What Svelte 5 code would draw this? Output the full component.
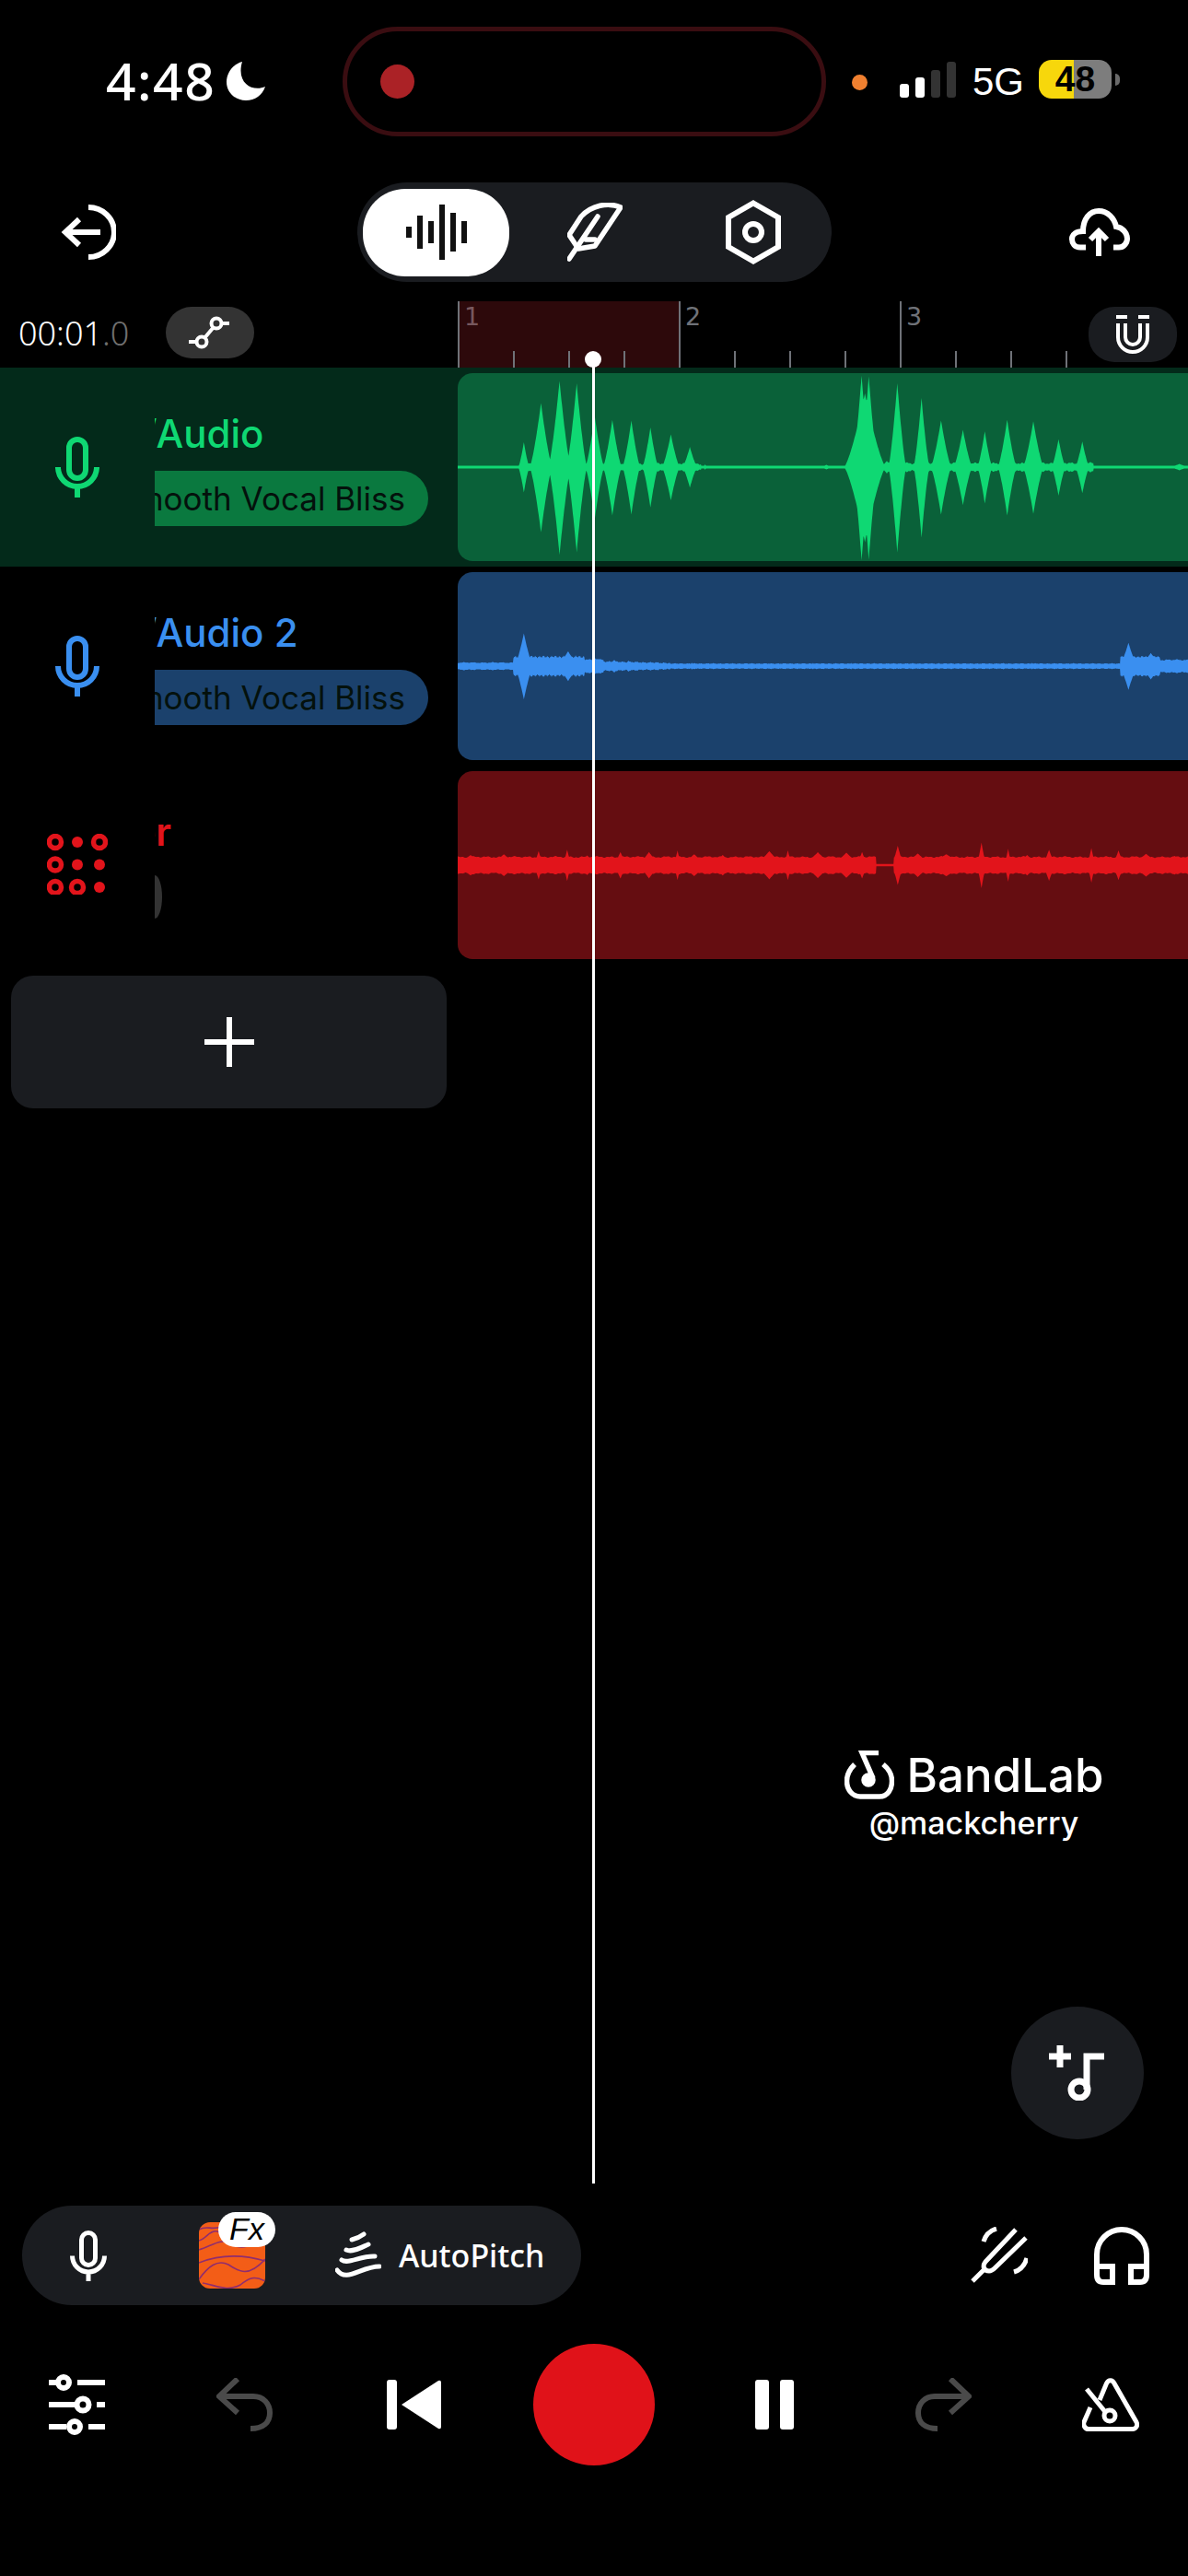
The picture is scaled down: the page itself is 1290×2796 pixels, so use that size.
<script>
  const bars = Array.from({ length: 12 }, (_, i) => ({
    major: i % 4 === 0,
    num: i % 4 === 0 ? i / 4 + 1 : null,
    hot: i < 4
  }));

  function noise(x) {
    return Math.sin(x * 0.31) * 0.5 + Math.sin(x * 0.83 + 1.2) * 0.3 + Math.sin(x * 0.11 + 2) * 0.2;
  }

  function wavePath(env) {
    const top = [];
    const bot = [];
    for (let z = 33; z <= 1570; z += 1) {
      const x = z / 1.936 - 17;
      const a = env(z) / 2.376;
      top.push(`${x.toFixed(1)} ${(102 - a).toFixed(1)}`);
      bot.unshift(`${x.toFixed(1)} ${(102 + a * 1.02).toFixed(1)}`);
    }
    return 'M' + top.join('L') + 'L' + bot.join('L') + 'Z';
  }

  // each peak: centre, amplitude, half-width at the foot
  function peaks(list, z) {
    let m = 0;
    for (const [p, a, w] of list) {
      const d = Math.abs(z - p);
      if (d < w) m = Math.max(m, a * Math.pow(1 - d / w, 1.35));
    }
    return m;
  }

  const greenPeaks = [
    [172, 64, 12], [208, 165, 24], [247, 222, 24], [283, 216, 22], [321, 132, 20], [358, 122, 20],
    [398, 120, 19], [438, 102, 17], [481, 84, 19], [521, 52, 16], [553, 7, 4],
    [882, 236, 20], [897, 234, 20], [889, 190, 44], [957, 216, 19], [1008, 178, 17], [1049, 120, 22],
    [1095, 96, 20], [1141, 92, 16], [1188, 122, 20], [1243, 118, 22], [1296, 72, 15], [1346, 66, 15],
    [1550, 8, 22], [808, 6, 14], [935, 16, 14]
  ];
  const bluePeaks = [
    [172, 84, 20], [1443, 60, 20],
    [265, 38, 26], [1490, 34, 26], [322, 20, 26], [362, 16, 18], [392, 14, 14], [525, 9, 7],
    [780, 8, 8], [860, 8, 8], [1045, 8, 8], [1180, 8, 10], [1240, 8, 10]
  ];
  const redPeaks = [
    [60, 26, 40], [130, 28, 36], [203, 36, 12], [263, 40, 10], [305, 25, 30], [375, 34, 16], [435, 34, 26],
    [495, 38, 9], [530, 28, 34], [590, 26, 30], [688, 36, 34], [727, 38, 10], [790, 33, 36], [850, 32, 36],
    [883, 34, 14], [958, 50, 14], [1000, 30, 36], [1060, 28, 50], [1134, 58, 11], [1190, 42, 9],
    [1230, 26, 30], [1276, 40, 15], [1365, 44, 10], [1422, 38, 14], [1480, 29, 40], [1540, 24, 34]
  ];

  const green = wavePath((z) => {
    let floor = 3.5;
    if (z > 165 && z < 545) floor = 9 + noise(z) * 3;
    if (z > 850 && z < 1370) floor = 10 + noise(z) * 3;
    return Math.max(floor, peaks(greenPeaks, z));
  });
  const blue = wavePath((z) => {
    let floor = 6.5 + noise(z * 1.5) * 1.2;
    if (z < 150) floor = 9 + noise(z) * 1.5;
    else if (z < 300) floor = 24 + noise(z * 2.4) * 4;
    else if (z < 340) floor = 17 + noise(z) * 2;
    else if (z < 480) floor = 12 - ((z - 340) / 140) * 4 + noise(z * 1.4) * 2;
    else if (z > 1425 && z < 1510) floor = 24 + noise(z * 2.4) * 3;
    else if (z >= 1510) floor = 16 + noise(z) * 2;
    return Math.max(floor, peaks(bluePeaks, z));
  });
  const red = wavePath((z) => {
    if (z > 912 && z < 950) return 3;
    return Math.max(21 + noise(z * 0.7) * 2.5, peaks(redPeaks, z));
  });

  const wave = [440, 452, 464, 476, 488, 500];
  const waveH = [12, 36, 24, 60, 42, 24];

  const dots = [
    [1, 0, 1],
    [1, 0, 0],
    [1, 1, 0]
  ];
</script>

{#snippet micIcon(cls)}
  <svg class={cls} viewBox="0 0 48 66" fill="none" stroke="currentColor" stroke-width="6">
    <rect x="15" y="3" width="18" height="42" rx="9" />
    <path d="M3 33A21 21 0 0 0 45 33M24 54V66" />
  </svg>
{/snippet}

<div class="app">
  <header class="status">
    <span class="time">4:48</span>
    <svg class="moon" viewBox="0 0 42 42"><path fill="#fff" d="M17 0C6 3 0 13 0 22 0 33 9 42 21 42 31 42 39 36 42 27 29 33 10 24 17 0Z" /></svg>
    <div class="island"><span class="rec-dot"></span></div>
    <span class="cam-dot"></span>
    <div class="signal">
      <i class="s1 on"></i><i class="s2 on"></i><i class="s3"></i><i class="s4"></i>
    </div>
    <span class="net">5G</span>
    <div class="battery"><span>48</span></div>
    <span class="nub"></span>
  </header>

  <nav class="toolbar">
    <svg class="back" viewBox="0 0 60 60" fill="none" stroke="#fff" stroke-width="6">
      <path d="M43 30H5M20 16L5 30 20 44" />
      <path d="M30 3A28 27 0 0 1 30 57" />
    </svg>
    <div class="segment">
      <div class="seg-active">
        <svg class="wave-icon" viewBox="440 222 66 60" fill="#111">
          {#each wave as x, i}
            <rect {x} y={252 - waveH[i] / 2} width="6" height={waveH[i]} />
          {/each}
        </svg>
      </div>
      <svg class="feather" viewBox="0 0 60 64" fill="none" stroke="#fff" stroke-width="5.500" stroke-linejoin="round" stroke-linecap="round">
        <path d="M58 5C44 -1 26 3 15 15L2 35 12 50 30 47 58 5Z" />
        <path d="M2 61L33 15M20 40H30" />
      </svg>
      <svg class="hex" viewBox="0 0 60 70" fill="none" stroke="#fff" stroke-width="6">
        <path d="M30 3.500L57 19V51L30 66.500 3 51V19Z" />
        <circle cx="30" cy="35" r="9" />
      </svg>
    </div>
    <svg class="cloud" viewBox="0 0 66 52" fill="none" stroke="#fff" stroke-width="6">
      <path d="M18 42.500H12C6 42.500 3 38 3 33.500 3 28 8 25 15 25 15 12 22 3 32 3 42 3 49 11 51 20 58 21 63 27 63 33 63 38 59 42.500 54 42.500H48" />
      <path d="M32 52V25M23 34L32 25 41 34" />
    </svg>
  </nav>

  <section class="ruler-row">
    <div class="ruler-left">
      <span class="clock">00:01<span class="dim">.0</span></span>
      <div class="curve-btn">
        <svg viewBox="0 0 50 40" width="50" height="40" fill="none" stroke="#fff" stroke-width="4">
          <circle cx="16" cy="30" r="5.500" />
          <circle cx="32" cy="10" r="5.500" />
          <path d="M19 26L29 14M2 30H10M38 10H46" />
        </svg>
      </div>
    </div>
    <div class="ruler">
      {#each bars as b}
        <div class="cell" class:hot={b.hot} class:major={b.major}>
          {#if b.num}<span class="num">{b.num}</span>{/if}
        </div>
      {/each}
    </div>
    <div class="magnet">
      <svg viewBox="0 0 36 42" width="36" height="42" fill="none" stroke="#fff" stroke-width="4">
        <path d="M2 9V24A16 16 0 0 0 34 24V9" />
        <path d="M10 9V24A8 8 0 0 0 26 24V9" />
        <path d="M0 2H12M24 2H36" />
      </svg>
    </div>
  </section>

  <section class="tracks">
    <div class="track selected green">
      <div class="head">
        {@render micIcon('mic')}
        <div class="label">
          <div class="title">/Audio</div>
          <div class="fx-pill">Smooth Vocal Bliss</div>
        </div>
      </div>
      <div class="clip"><svg class="wave" viewBox="0 0 793 204"><path d={green} /></svg></div>
    </div>

    <div class="track blue">
      <div class="head">
        {@render micIcon('mic')}
        <div class="label">
          <div class="title">/Audio 2</div>
          <div class="fx-pill">Smooth Vocal Bliss</div>
        </div>
      </div>
      <div class="clip"><svg class="wave" viewBox="0 0 793 204"><path d={blue} /></svg></div>
    </div>

    <div class="track red">
      <div class="head">
        <svg class="pads" viewBox="0 0 66 66" fill="#e2141b">
          {#each dots as row, r}
            {#each row as ring, c}
              {#if ring}
                <circle cx={9 + c * 24} cy={9 + r * 24.5} r="6.500" fill="none" stroke="#e2141b" stroke-width="5.500" />
              {:else}
                <circle cx={9 + c * 24} cy={9 + r * 24.5} r="6" />
              {/if}
            {/each}
          {/each}
        </svg>
        <div class="label">
          <div class="title clipped"><span>Sampler</span></div>
          <div class="stub"></div>
        </div>
      </div>
      <div class="clip"><svg class="wave" viewBox="0 0 793 204"><path d={red} /></svg></div>
    </div>
  </section>

  <button class="add" aria-label="Add track">
    <svg viewBox="0 0 54 54" width="54" height="54" fill="#fff"><rect x="24" width="6" height="54" /><rect y="24" width="54" height="6" /></svg>
  </button>

  <footer class="bottom">
    <div class="fx-row">
      <div class="effects">
        {@render micIcon('mic-small')}
        <div class="tile">
          <svg viewBox="0 0 72 72" width="72" height="72" fill="none" stroke="#8f2d6f" stroke-width="1.600">
            <path d="M0 8C8 3 14 9 24 5" />
            <path d="M0 20C8 18 12 8 20 10 32 14 44 30 72 24" />
            <path d="M0 30C14 26 24 16 36 24 46 30 56 26 72 18" />
            <path d="M0 44C20 36 44 34 72 42" />
            <path d="M0 62C10 48 20 40 32 46 44 54 54 60 72 40" />
            <path d="M4 66C18 68 30 76 45 68 55 60 60 58 72 64" />
          </svg>
          <span class="fx-badge">Fx</span>
        </div>
        <svg class="pitch" viewBox="0 0 50 53" fill="none" stroke="#fff" stroke-width="5" stroke-linecap="round">
          <path d="M18 9C22 8 27 6 31 3" />
          <path d="M12 20C18 23 27 18 36 14" />
          <path d="M7 31C14 36 28 26 43 27" />
          <path d="M2 42C12 56 28 38 48 38" />
        </svg>
        <span class="pitch-label">AutoPitch</span>
      </div>
      <svg class="fork" viewBox="0 0 63 62" fill="none" stroke="#fff" stroke-width="5">
        <path d="M3 59L17 45" />
        <path d="M50 3L17 38C13 43 16 48 21 48 24 48 26 46 28 44L61 12" />
        <path d="M29 2C22 4 17 9 15 16" />
        <path d="M48 49C55 47 60 41 62 34" />
      </svg>
      <svg class="phones" viewBox="0 0 60 63" fill="none" stroke="#fff" stroke-width="6">
        <path d="M3 46V30A27 27 0 0 1 57 30V46" />
        <path d="M3 43H20V60H10Q3 60 3 52Z" />
        <path d="M57 43H40V60H50Q57 60 57 52Z" />
      </svg>
    </div>

    <div class="controls">
      <svg class="sliders" viewBox="0 0 61 66" fill="none" stroke="#fff" stroke-width="6">
        <path d="M0 9H8M31 9H61M0 33H29M52 33H61M0 57H19M43 57H61" />
        <circle cx="16" cy="9" r="6" />
        <circle cx="37" cy="33" r="6.500" />
        <circle cx="28" cy="57" r="6" />
      </svg>
      <svg class="undo" viewBox="0 0 61 58" fill="none" stroke="#4a4a4a" stroke-width="6">
        <path d="M23 1L3 20 23 38M3 20H40C51 20 58 28 58 38 58 48 51 55 37 55" />
      </svg>
      <svg class="skip" viewBox="0 0 59 54" fill="#fff">
        <rect width="11" height="54" rx="3" />
        <path d="M16 27L56 1Q59 0 59 3V51Q59 54 56 53Z" />
      </svg>
      <div class="record"></div>
      <div class="pause"><i></i><i></i></div>
      <svg class="redo" viewBox="0 0 61 58" fill="none" stroke="#4a4a4a" stroke-width="6">
        <path d="M38 1L58 20 38 38M58 20H21C10 20 3 28 3 38 3 48 10 55 24 55" />
      </svg>
      <svg class="metro" viewBox="0 0 62 59" fill="none" stroke="#fff" stroke-width="5">
        <path d="M19 24L26.500 6C28.500 1.500 33 1.500 35 6L59 48C61 52 58 55.500 55 55.500H7C3 55.500 1 51 2 48L9 32" />
        <path d="M5 12L26 38" />
        <circle cx="30" cy="41" r="6" />
      </svg>
    </div>
  </footer>

  <div class="playhead"></div>

  <div class="watermark">
    <div class="brand">
      <svg viewBox="0 0 54 53" width="54" height="53" fill="none" stroke="#fff" stroke-width="5.500">
        <path d="M11 15C5 21 2.500 27 2.500 33 2.500 43 9 50 17 50H38C47 50 51.500 42 51.500 33 51.500 27 48 20 42 15" />
        <path d="M37 2.500H19L31 30" />
        <circle cx="26" cy="32" r="5" fill="#fff" />
      </svg>
      <span class="brand-name">BandLab</span>
    </div>
    <span class="handle">@mackcherry</span>
  </div>

  <button class="fab" aria-label="Add music">
    <svg viewBox="0 0 62 60" width="62" height="60" fill="none" stroke="#fff" stroke-width="7">
      <path d="M0 12H24M12 0V24" />
      <path d="M60 12H41V48" />
      <circle cx="33" cy="48" r="9" />
    </svg>
  </button>
</div>

<style>
  :global(body) {
    margin: 0;
    background: #000;
  }
  .app {
    position: relative;
    width: 1290px;
    height: 2796px;
    background: #000;
    color: #fff;
    overflow: hidden;
    display: flex;
    flex-direction: column;
    font-family: "Noto Sans", sans-serif;
  }
  svg {
    display: block;
    flex: none;
  }
  button {
    border: 0;
    padding: 0;
    color: inherit;
  }

  /* status bar */
  .status {
    height: 198px;
    flex: none;
    display: flex;
    align-items: flex-start;
    padding-left: 115px;
    box-sizing: border-box;
  }
  .time {
    width: 117px;
    margin-top: 49px;
    font-size: 57px;
    letter-spacing: 1.5px;
    line-height: 76px;
    font-weight: 500;
    white-space: nowrap;
  }
  .moon {
    width: 42px;
    height: 42px;
    margin: 67px 0 0 14px;
  }
  .island {
    width: 525px;
    height: 119px;
    margin: 29px 0 0 84px;
    box-sizing: border-box;
    border: 5px solid #3a0d11;
    border-radius: 60px;
    display: flex;
    align-items: center;
    padding-left: 36px;
  }
  .rec-dot {
    width: 37px;
    height: 37px;
    border-radius: 50%;
    background: #ab2226;
  }
  .cam-dot {
    width: 17px;
    height: 17px;
    border-radius: 50%;
    background: #f08030;
    margin: 81px 0 0 28px;
  }
  .signal {
    display: flex;
    align-items: flex-end;
    gap: 7px;
    height: 39px;
    margin: 67px 0 0 35px;
  }
  .signal i {
    width: 10px;
    border-radius: 3px;
    background: #333;
  }
  .signal .on {
    background: #fff;
  }
  .s1 { height: 15px; }
  .s2 { height: 22px; }
  .s3 { height: 30px; }
  .s4 { height: 39px; }
  .net {
    font-family: "Liberation Sans", sans-serif;
    font-size: 42px;
    line-height: 48px;
    margin: 65px 0 0 18px;
    width: 55px;
  }
  .battery {
    width: 79px;
    height: 42px;
    margin: 65px 0 0 17px;
    border-radius: 14px;
    background: linear-gradient(90deg, #f7d70c 0 38px, #7d7d7d 38px);
    color: #000;
    display: flex;
    align-items: center;
    justify-content: center;
    font-family: "Liberation Sans", sans-serif;
    font-size: 39px;
    font-weight: 700;
  }
  .nub {
    width: 5px;
    height: 13px;
    margin: 80px 0 0 4px;
    border-radius: 0 6px 6px 0;
    background: #6a6a6a;
  }

  /* toolbar */
  .toolbar {
    height: 108px;
    flex: none;
    display: flex;
    align-items: center;
  }
  .back {
    width: 60px;
    height: 60px;
    margin-left: 66px;
  }
  .segment {
    width: 515px;
    height: 108px;
    margin-left: 262px;
    box-sizing: border-box;
    background: #1a1c20;
    border-radius: 54px;
    display: flex;
    align-items: center;
    padding-left: 6px;
  }
  .seg-active {
    width: 159px;
    height: 95px;
    border-radius: 46px;
    background: #fff;
    display: flex;
    align-items: center;
    justify-content: center;
  }
  .wave-icon {
    width: 66px;
    height: 60px;
  }
  .feather {
    width: 60px;
    height: 64px;
    margin-left: 63px;
  }
  .hex {
    width: 60px;
    height: 70px;
    margin-left: 112px;
  }
  .cloud {
    width: 66px;
    height: 52px;
    margin-left: 258px;
  }

  /* ruler */
  .ruler-row {
    position: relative;
    height: 72px;
    margin-top: 21px;
    flex: none;
    display: flex;
  }
  .ruler-left {
    width: 497px;
    flex: none;
    display: flex;
    align-items: flex-start;
    padding-left: 20px;
    box-sizing: border-box;
  }
  .clock {
    width: 160px;
    font-size: 36px;
    font-weight: 300;
    line-height: 50px;
    margin-top: 10px;
    white-space: nowrap;
  }
  .dim {
    color: #6f6f6f;
  }
  .curve-btn {
    width: 96px;
    height: 56px;
    margin-top: 6px;
    border-radius: 28px;
    background: #333;
    display: flex;
    align-items: center;
    justify-content: center;
  }
  .ruler {
    display: flex;
    height: 72px;
  }
  .cell {
    position: relative;
    width: 60px;
    height: 72px;
  }
  .cell.hot {
    background: #2d090b;
  }
  .cell::before {
    content: "";
    position: absolute;
    left: 0;
    bottom: 0;
    width: 2px;
    height: 18px;
    background: #6f7278;
  }
  .cell.major::before {
    height: 72px;
    width: 2px;
  }
  .num {
    position: absolute;
    left: 7px;
    top: 1px;
    font-family: "DejaVu Sans", sans-serif;
    font-size: 27px;
    line-height: 32px;
    color: #6f7278;
  }
  .hot .num {
    color: #77585e;
  }
  .magnet {
    position: absolute;
    right: 12px;
    top: 6px;
    width: 96px;
    height: 60px;
    border-radius: 28px;
    background: #1a1c20;
    display: flex;
    align-items: center;
    justify-content: center;
  }

  /* tracks */
  .tracks {
    flex: none;
    display: flex;
    flex-direction: column;
  }
  .track {
    height: 216px;
    display: flex;
    box-sizing: border-box;
    padding: 6px 0;
  }
  .selected {
    background: #032a1a;
  }
  .green { --c: #0fd873; --clip: #0a6139; --pill: #0a793f; }
  .blue { --c: #3a8ff0; --clip: #1b416c; --pill: #1b416c; }
  .red { --c: #e2141b; --clip: #650d11; --pill: #333; }
  .head {
    width: 497px;
    flex: none;
    display: flex;
    align-items: flex-start;
    margin-top: -6px;
    color: var(--c);
  }
  .mic {
    width: 48px;
    height: 66px;
    margin: 75px 0 0 60px;
  }
  .pads {
    width: 66px;
    height: 66px;
    margin: 74px 0 0 51px;
  }
  .label {
    width: 297px;
    margin-left: 60px;
    overflow: hidden;
    padding-top: 48px;
    box-sizing: border-box;
  }
  .red .label {
    margin-left: 51px;
  }
  .title {
    font-family: Inter, sans-serif;
    font-size: 42px;
    font-weight: 500;
    line-height: 48px;
    white-space: nowrap;
    margin-left: -13px;
  }
  .title.clipped {
    margin-left: 0;
    width: 18px;
    display: flex;
    justify-content: flex-end;
    overflow: hidden;
    font-weight: 600;
  }
  .fx-pill {
    height: 60px;
    margin-top: 16px;
    border-radius: 0 30px 30px 0;
    background: var(--pill);
    color: #04110c;
    display: flex;
    align-items: center;
    justify-content: flex-end;
    padding-right: 25px;
    overflow: hidden;
    font-family: Inter, sans-serif;
    font-size: 35px;
    white-space: nowrap;
  }
  .stub {
    width: 8px;
    height: 47px;
    margin-top: 23px;
    border-radius: 0 100% 100% 0 / 0 50% 50% 0;
    background: #333;
  }
  .clip {
    flex: 1;
    height: 204px;
    background: var(--clip);
    border-radius: 16px 0 0 16px;
    overflow: hidden;
  }
  .wave {
    width: 793px;
    height: 204px;
    fill: var(--c);
  }

  .add {
    width: 473px;
    height: 144px;
    margin: 12px 0 0 12px;
    flex: none;
    border-radius: 24px;
    background: #1a1c20;
    display: flex;
    align-items: center;
    justify-content: center;
  }

  /* bottom */
  .bottom {
    margin-top: auto;
    flex: none;
    padding-bottom: 120px;
  }
  .fx-row {
    height: 108px;
    display: flex;
    align-items: center;
  }
  .effects {
    width: 607px;
    height: 108px;
    margin-left: 24px;
    border-radius: 54px;
    background: #1a1c20;
    display: flex;
    align-items: center;
  }
  .mic-small {
    width: 40px;
    height: 55px;
    margin-left: 52px;
    color: #fff;
  }
  .tile {
    position: relative;
    width: 72px;
    height: 72px;
    margin-left: 100px;
    border-radius: 12px;
    background: #f35d17;
  }
  .tile svg {
    border-radius: 12px;
  }
  .fx-badge {
    position: absolute;
    left: 21px;
    top: -11px;
    width: 62px;
    height: 38px;
    border-radius: 19px;
    background: #fff;
    color: #000;
    text-align: center;
    font-family: "Liberation Sans", sans-serif;
    font-style: italic;
    font-size: 34px;
    line-height: 37px;
  }
  .pitch {
    width: 50px;
    height: 53px;
    margin-left: 76px;
  }
  .pitch-label {
    margin-left: 19px;
    font-size: 34px;
    font-weight: 500;
    white-space: nowrap;
  }
  .fork {
    width: 63px;
    height: 62px;
    margin-left: 422px;
  }
  .phones {
    width: 60px;
    height: 63px;
    margin-left: 72px;
  }
  .controls {
    height: 132px;
    margin-top: 42px;
    display: flex;
    align-items: center;
  }
  .sliders {
    width: 61px;
    height: 66px;
    margin-left: 53px;
  }
  .undo {
    width: 61px;
    height: 58px;
    margin-left: 121px;
  }
  .skip {
    width: 59px;
    height: 54px;
    margin-left: 124px;
  }
  .record {
    width: 132px;
    height: 132px;
    margin-left: 100px;
    border-radius: 50%;
    background: #e01219;
  }
  .pause {
    display: flex;
    gap: 12px;
    margin-left: 109px;
  }
  .pause i {
    width: 15px;
    height: 54px;
    border-radius: 3px;
    background: #fff;
  }
  .redo {
    width: 61px;
    height: 58px;
    margin-left: 132px;
  }
  .metro {
    width: 62px;
    height: 59px;
    margin-left: 120px;
  }

  /* overlays */
  .playhead {
    position: absolute;
    left: 643px;
    top: 390px;
    width: 3px;
    height: 1980px;
    background: #fff;
  }
  .playhead::before {
    content: "";
    position: absolute;
    left: -8px;
    top: -9px;
    width: 18px;
    height: 18px;
    border-radius: 50%;
    background: #fff;
  }
  .watermark {
    position: absolute;
    left: 917px;
    top: 1900px;
    width: 281px;
    display: flex;
    flex-direction: column;
    align-items: center;
  }
  .brand {
    display: flex;
    align-items: center;
    gap: 14px;
    height: 53px;
  }
  .brand-name {
    font-family: Inter, sans-serif;
    font-size: 51px;
    font-weight: 500;
    line-height: 53px;
    white-space: nowrap;
  }
  .handle {
    margin-top: 5px;
    font-family: Inter, sans-serif;
    font-size: 34px;
    font-weight: 500;
    line-height: 42px;
  }
  .fab {
    position: absolute;
    left: 1098px;
    top: 2178px;
    width: 144px;
    height: 144px;
    border-radius: 50%;
    background: #1a1c20;
    display: flex;
    align-items: center;
    justify-content: center;
  }
</style>
